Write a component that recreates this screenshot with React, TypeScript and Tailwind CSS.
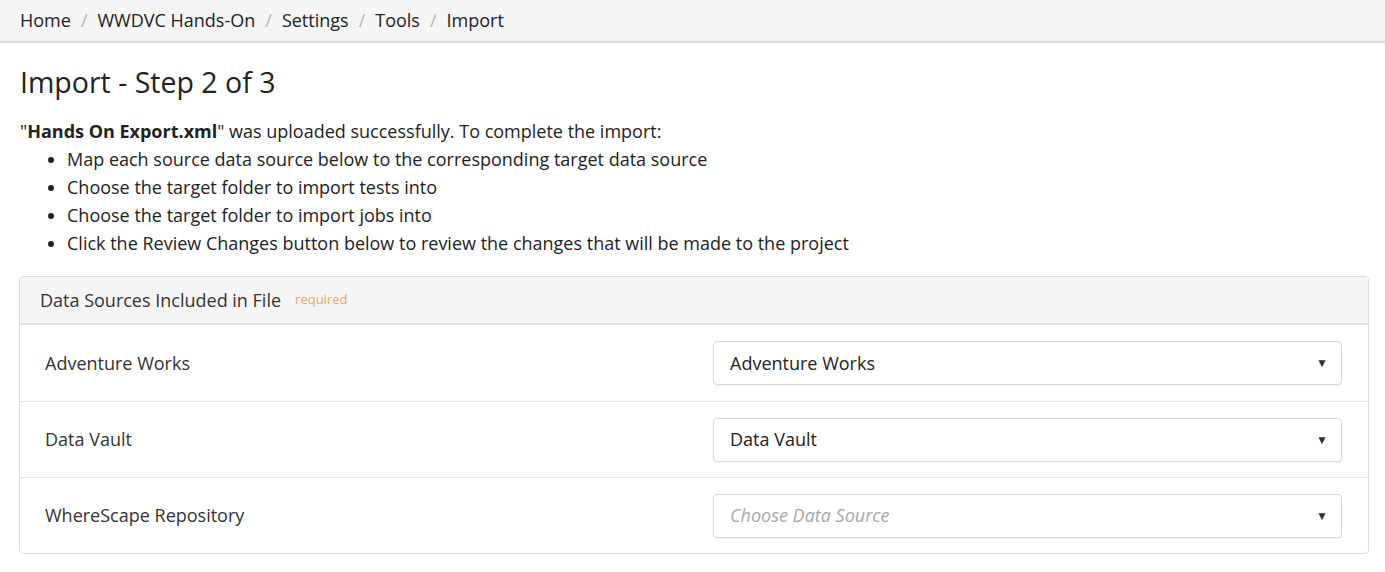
const crumbs = ['Home', 'WWDVC Hands-On', 'Settings', 'Tools', 'Import'];

const steps = [
  'Map each source data source below to the corresponding target data source',
  'Choose the target folder to import tests into',
  'Choose the target folder to import jobs into',
  'Click the Review Changes button below to review the changes that will be made to the project',
];

const sources = [
  { name: 'Adventure Works', target: 'Adventure Works' },
  { name: 'Data Vault', target: 'Data Vault' },
  { name: 'WhereScape Repository', target: '' },
];

function SourceSelect({ value }: { value: string }) {
  return (
    <div className="flex h-[44px] w-[629px] items-center justify-between rounded border border-[#d9d9d9] bg-white pl-4 pr-[13px] shadow-[0_1px_2px_rgba(0,0,0,0.06)]">
      {value ? (
        <span className="text-[18px] text-[#222]">{value}</span>
      ) : (
        <span className="text-[18px] italic text-[#a8a8a8]">Choose Data Source</span>
      )}
      <span className="text-[12px] text-[#333]">▼</span>
    </div>
  );
}

export default function App() {
  return (
    <div className="min-h-screen bg-white text-[#222]" style={{ fontFamily: '"Open Sans", "Noto Sans", sans-serif' }}>
      <nav className="flex h-[43px] items-center border-b-2 border-[#dcdcdc] bg-[#f5f5f5] px-5">
        {crumbs.map((c, i) => (
          <span key={c} className="flex items-center text-[18px] text-[#222]">
            {i > 0 && <span className="mx-[10px] text-[#b5b5b5]">/</span>}
            {c}
          </span>
        ))}
      </nav>

      <main className="pl-[19px] pr-[16px]">
        <h1 className="ml-px mt-[19px] text-[28.5px] font-normal leading-[40px] text-[#222]">Import - Step 2 of 3</h1>

        <div className="ml-px mt-[15px] text-[18px] leading-[28px] text-[#222]">
          <p>
            "<strong className="font-bold">Hands On Export.xml</strong>" was uploaded successfully. To complete the import:
          </p>
          <ul className="list-disc pl-[47px]">
            {steps.map((s) => (
              <li key={s}>{s}</li>
            ))}
          </ul>
        </div>

        <section className="mt-[19px] rounded border border-[#dadada] bg-white">
          <div className="flex h-[48px] items-center border-b-2 border-[#e0e0e0] bg-[#f5f5f5] px-5">
            <span className="text-[18px] text-[#333]">Data Sources Included in File</span>
            <span className="ml-[14px] text-[13px] text-[#e0a866]">required</span>
          </div>
          {sources.map((s, i) => (
            <div
              key={s.name}
              className={`flex h-[76px] items-center justify-between pl-[25px] pr-[26px] ${i > 0 ? 'border-t border-[#e3e3e3]' : ''}`}
            >
              <span className="text-[18px] text-[#333]">{s.name}</span>
              <SourceSelect value={s.target} />
            </div>
          ))}
        </section>
      </main>
    </div>
  );
}
